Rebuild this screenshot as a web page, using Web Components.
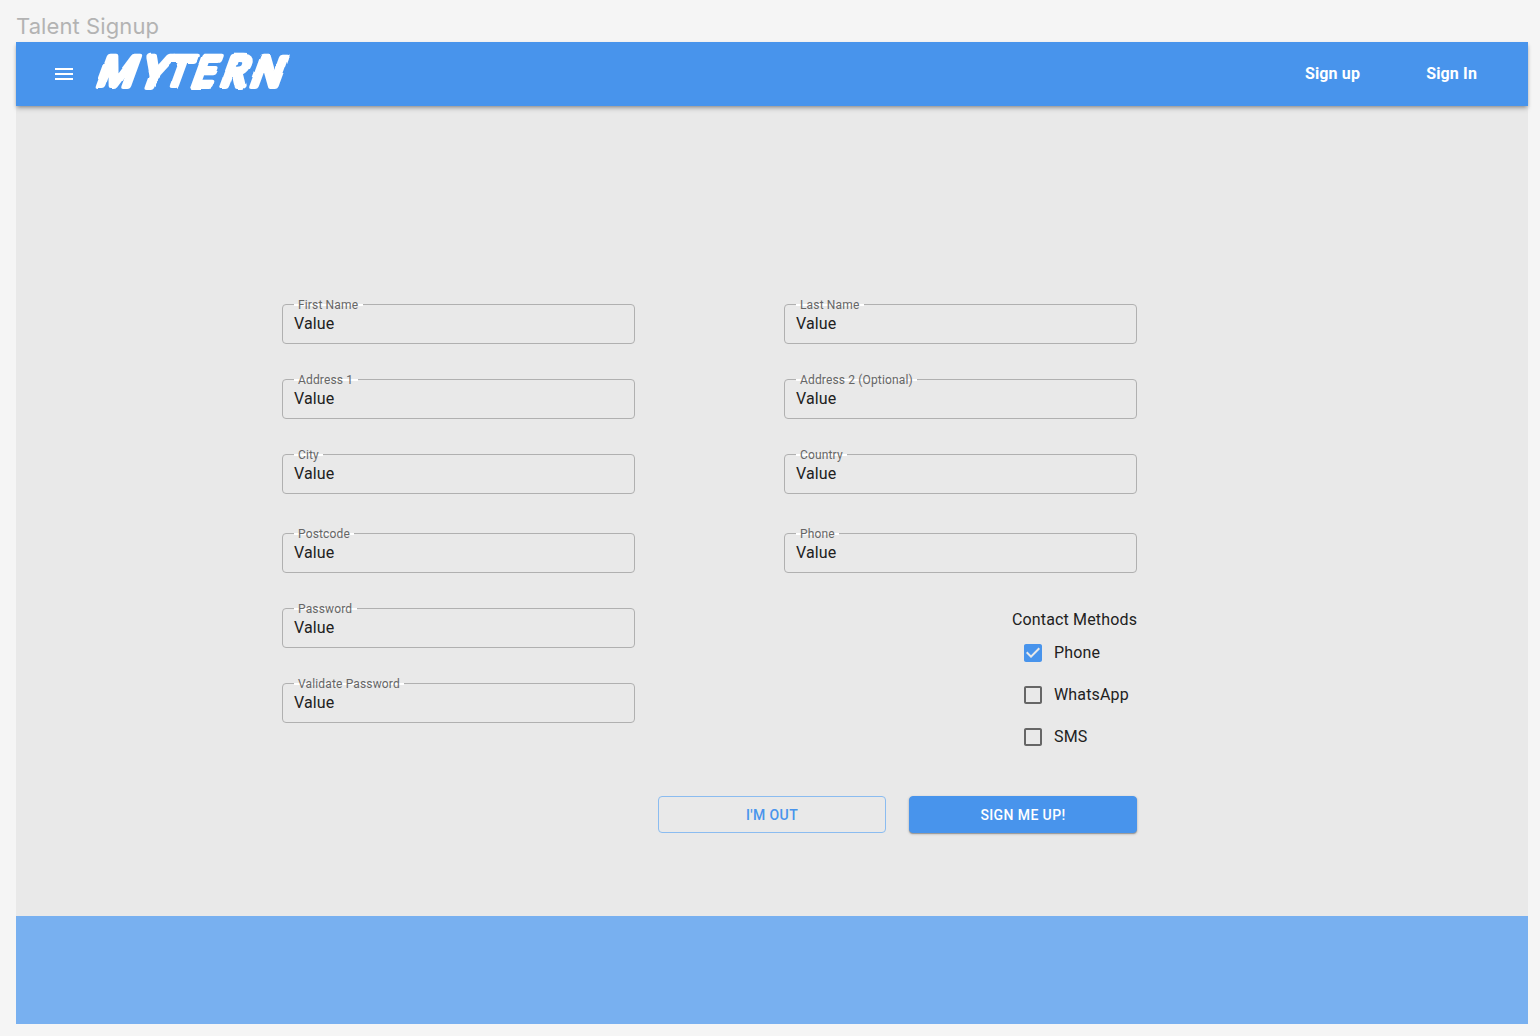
<!DOCTYPE html>
<html lang="en"><head><meta charset="utf-8"><title>Talent Signup</title>
<style>
body{margin:0;background:#f5f5f5;font-family:Roboto,"Liberation Sans",sans-serif;color:#212121;overflow:hidden}
</style></head><body>
<signup-page></signup-page>
<script>
const define=(name,html,setup)=>customElements.define(name,class extends HTMLElement{
  connectedCallback(){
    if(this.shadowRoot)return;
    const t=document.createElement('template');t.innerHTML=html;
    this.attachShadow({mode:'open'}).append(t.content.cloneNode(true));
    if(setup)setup(this,this.shadowRoot);
  }
});

define('brand-logo',`<style>:host{display:block;width:230px;height:64px}svg{display:block;overflow:visible}text{font:400 41px "Noto Sans",sans-serif;fill:#fff;stroke:#fff;stroke-width:6;stroke-linejoin:round}</style>
<svg width="230" height="64" viewBox="0 0 230 64"><defs><filter id="rough" x="-5%" y="-20%" width="110%" height="140%"><feTurbulence type="fractalNoise" baseFrequency=".045" numOctaves="1" seed="9"/><feDisplacementMap in="SourceGraphic" scale="4" xChannelSelector="R" yChannelSelector="G"/></filter></defs>
<g filter="url(#rough)"><text transform="translate(1 44.3) skewX(-20)" x="0 44 67.5 94.5 123.5 153.5" y="0 0 0 0 0 0">MYTERN</text></g></svg>`);

define('nav-link',`<style>:host{display:block;font-size:16px;font-weight:700;line-height:24px;letter-spacing:.15px;color:#fff;white-space:nowrap}</style><slot></slot>`);

define('app-header',`<style>:host{display:flex;align-items:center;height:64px;box-sizing:border-box;padding:0 51px 0 36px;background:#4894ec;position:relative;box-shadow:0 2px 4px -1px rgba(0,0,0,.4),0 4px 5px rgba(0,0,0,.08)}
.menu{width:24px;height:24px;fill:#fff;margin-right:18px}nav{display:flex;gap:66px;margin-left:auto}</style>
<svg class="menu" viewBox="0 0 24 24"><path d="M3 18h18v-2H3v2zm0-5h18v-2H3v2zm0-7v2h18V6H3z"/></svg>
<brand-logo></brand-logo><nav><slot></slot></nav>`);

define('text-field',`<style>:host{display:block;position:relative;box-sizing:border-box;width:353px;height:40px;border:1px solid #b0b0b0;border-radius:4px;padding:7px 11px}
.label{position:absolute;left:11px;top:-7px;padding:0 4.4px 0 4px;font-size:12px;line-height:14px;letter-spacing:.15px;color:#666;white-space:nowrap;background:linear-gradient(#fff,#fff) 0 6px/100% 2px no-repeat}
.value{font-size:16px;line-height:24px;letter-spacing:.15px;color:#212121}</style><span class="label"></span><div class="value"><slot></slot></div>`,
(h,r)=>r.querySelector('.label').textContent=h.getAttribute('label'));

define('check-option',`<style>:host{display:flex;align-items:center;height:42px;padding-left:9px;gap:9px;font-size:16px;line-height:24px;letter-spacing:.15px}svg{width:24px;height:24px;fill:#666}:host([checked]) svg{fill:#4894ec}.label{margin-top:-1px}.on,:host([checked]) .off{display:none}:host([checked]) .on{display:block}</style>
<svg viewBox="0 0 24 24"><path class="off" d="M19 5v14H5V5h14m0-2H5c-1.1 0-2 .9-2 2v14c0 1.1.9 2 2 2h14c1.1 0 2-.9 2-2V5c0-1.1-.9-2-2-2z"/><path class="on" d="M19 3H5c-1.11 0-2 .9-2 2v14c0 1.1.89 2 2 2h14c1.11 0 2-.9 2-2V5c0-1.1-.89-2-2-2zm-9 14l-5-5 1.41-1.41L10 14.17l7.59-7.59L19 8l-9 9z"/></svg><span class="label"><slot></slot></span>`);

define('contact-methods',`<style>:host{display:block;width:125px}.title{font-size:16px;line-height:24px;letter-spacing:.15px;white-space:nowrap}</style><div class="title">Contact Methods</div><slot></slot>`);

define('action-button',`<style>:host{display:flex;align-items:center;justify-content:center;box-sizing:border-box;width:228px;height:37px;border:1px solid #8bbcf0;border-radius:4px;color:#4894ec;font-size:14px;font-weight:500;letter-spacing:.4px;line-height:24px}
:host([primary]){border-color:#4894ec;background:#4894ec;color:#fff;box-shadow:0 1px 3px rgba(0,0,0,.2),0 1px 1px rgba(0,0,0,.25)}</style><slot></slot>`);

define('signup-form',`<style>:host{display:flex;flex-direction:column;width:855px}
.columns{display:flex;justify-content:space-between}.col{display:flex;flex-direction:column;gap:35px}.wide{margin-top:4px}contact-methods{align-self:flex-end}
.actions{display:flex;justify-content:flex-end;gap:23px;margin-top:38px}</style>
<div class="columns"><div class="col">
<text-field label="First Name">Value</text-field><text-field label="Address 1">Value</text-field><text-field label="City">Value</text-field><text-field class="wide" label="Postcode">Value</text-field><text-field label="Password">Value</text-field><text-field label="Validate Password">Value</text-field>
</div><div class="col">
<text-field label="Last Name">Value</text-field><text-field label="Address 2 (Optional)">Value</text-field><text-field label="Country">Value</text-field><text-field class="wide" label="Phone">Value</text-field>
<contact-methods><check-option checked>Phone</check-option><check-option>WhatsApp</check-option><check-option>SMS</check-option></contact-methods>
</div></div>
<div class="actions"><action-button>I'M OUT</action-button><action-button primary>SIGN ME UP!</action-button></div>`);

define('signup-page',`<style>:host{display:flex;flex-direction:column;box-sizing:border-box;height:1036px;padding:12px 12px 12px 16px}
h1{margin:0;height:30px;font:400 22px/29px Inter,sans-serif;letter-spacing:.09px;color:#b3b3b3}main{flex:1;background:#e9e9e9;box-sizing:border-box;padding:198px 0 0 266px}footer{height:108px;background:#78b0f0}</style>
<h1>Talent Signup</h1><app-header><nav-link>Sign up</nav-link><nav-link>Sign In</nav-link></app-header><main><signup-form></signup-form></main><footer></footer>`);
</script></body></html>
